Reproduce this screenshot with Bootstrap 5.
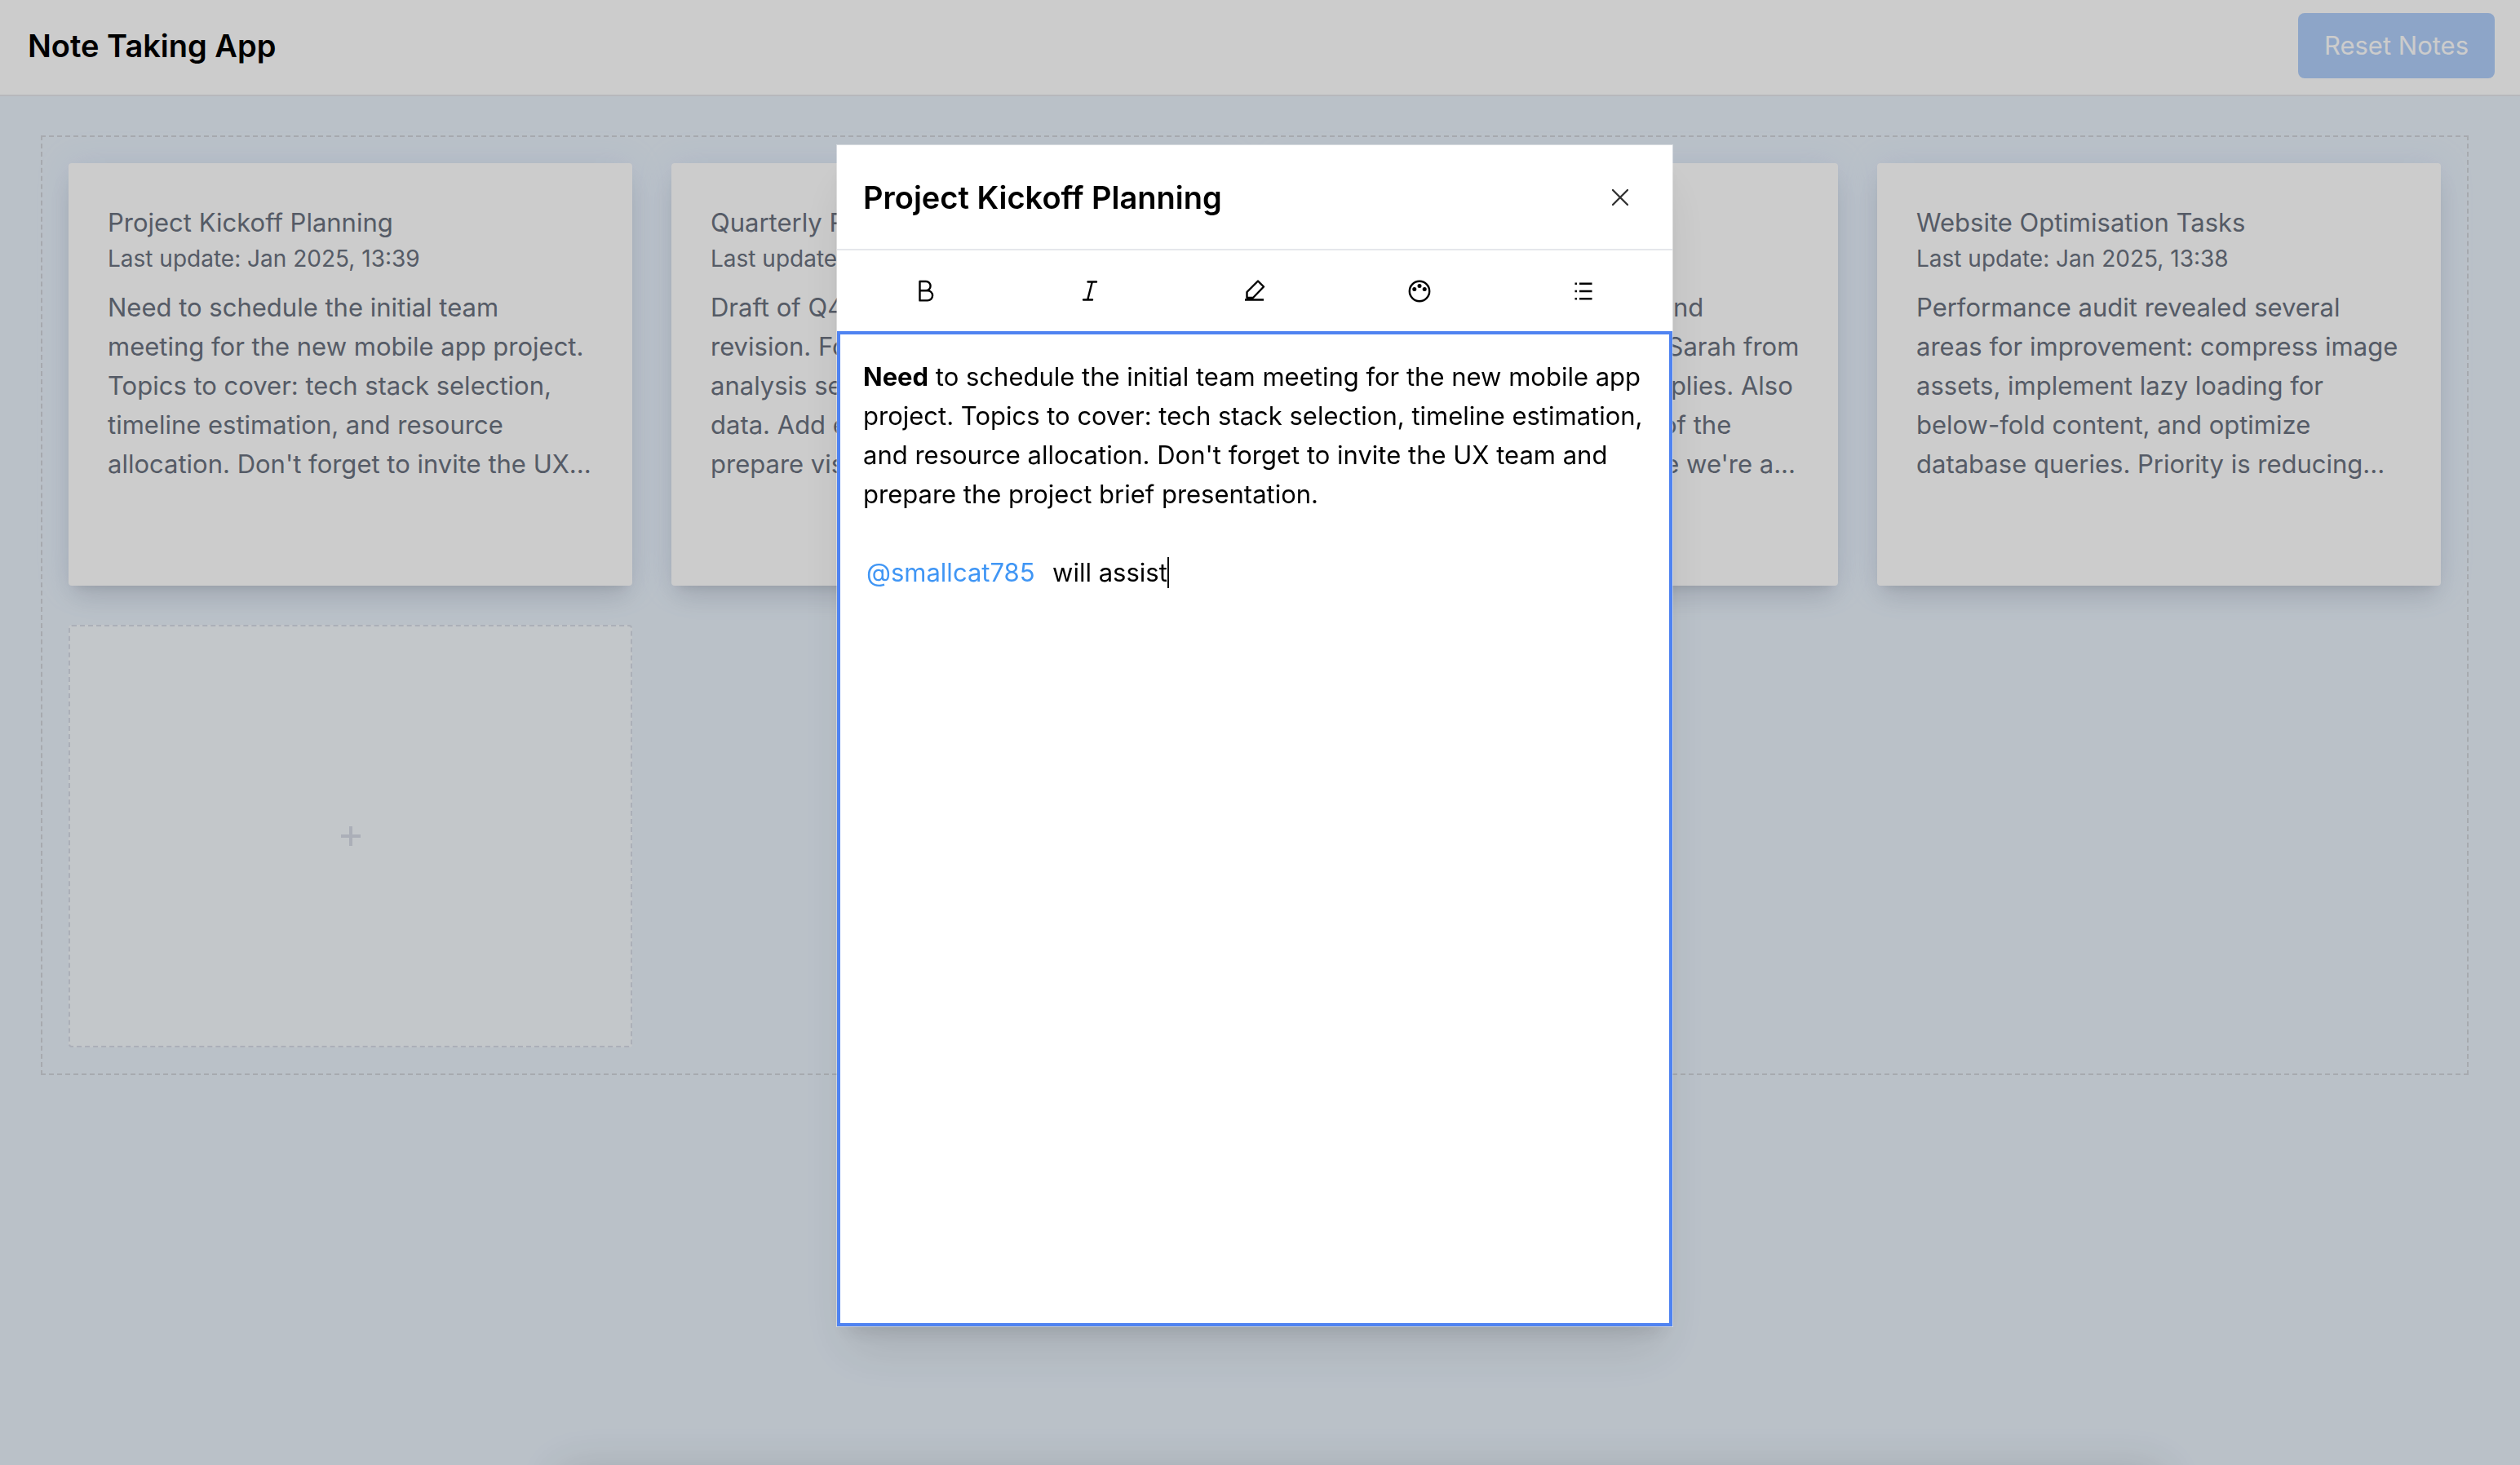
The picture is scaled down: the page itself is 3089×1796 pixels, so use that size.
<!DOCTYPE html>
<html lang="en">
<head>
<meta charset="utf-8">
<meta name="viewport" content="width=device-width, initial-scale=1">
<title>Note Taking App</title>
<link href="https://cdn.jsdelivr.net/npm/bootstrap@5.3.0/dist/css/bootstrap.min.css" rel="stylesheet">
<style>
  body { font-family: Inter, "Liberation Sans", sans-serif; font-size: 31px; line-height: 48px; color: #000; background: #e9f2fb; min-height: 100vh; }
  .app-bar { padding: 16px 31px 20px 34px; border-bottom: 2px solid #e5e7eb; }
  .app-title { font-size: 38px; line-height: 48px; font-weight: 600; }
  .btn-reset { --bs-btn-font-size: 31px; --bs-btn-line-height: 48px; --bs-btn-padding-x: 32px; --bs-btn-padding-y: 16px; --bs-btn-border-width: 0; --bs-btn-border-radius: 8px;
    --bs-btn-color: #fff; --bs-btn-bg: #b1cffb; }
  .board-wrap { padding: 48px 63px 48px 50px; }
  .board { border: 2px dashed #d1d5db; padding: 32px; display: grid; grid-template-columns: repeat(4, minmax(0, 1fr)); gap: 48px; }
  .note { height: 518px; padding: 49px 48px 48px; background: #fff; border-radius: 4px; color: #6b7280; box-shadow: 0 20px 30px -6px rgba(0,0,0,.1), 0 8px 12px -8px rgba(0,0,0,.1), 0 0 40px rgba(160,180,230,.2); white-space: nowrap; }
  .note-title { font-size: 31px; line-height: 48px; font-weight: 400; margin: 0; }
  .note-date { font-size: 28px; line-height: 40px; margin: 0 0 16px; }
  .icon-btn { background: none; border: 0; padding: 0; color: #000; display: flex; align-items: center; justify-content: center; }
  .note-add { height: 518px; background: rgba(255,255,255,.5); border: 2px dashed #d6dbe6; color: #d6dbe6; border-radius: 4px; }
  .scrim { position: fixed; inset: 0; background: rgba(0,0,0,.2); }
  .tray-shadow { position: fixed; top: 100%; left: 22%; right: 14%; height: 100px; box-shadow: 0 0 60px rgba(0,0,0,.12); }
  .dialog-layer { position: fixed; inset: 0 13px 0 0; padding-top: 178px; }
  .note-dialog { width: 1024px; background: #fff; box-shadow: 0 0 0 1px rgba(255,255,255,.4), 0 40px 60px -10px rgba(0,0,0,.1), 0 16px 24px -12px rgba(0,0,0,.12); }
  .dialog-head { height: 129px; padding: 0 32px; border-bottom: 2px solid #e5e7eb; }
  .dialog-title { font-size: 38px; line-height: 48px; font-weight: 600; }
  .close-btn { width: 64px; height: 64px; color: #333; }
  .tool-row { height: 99px; padding: 0 8px; }
  .editor { min-height: 1220px; border: 4px solid #4f83f1; padding: 28px; outline: 0; white-space: nowrap; }
  .mention { color: #4096f5; padding: 0 4px; }
  .caret { display: inline-block; width: 2px; height: 38px; background: #000; vertical-align: -8px; }
  svg { fill: none; stroke: currentColor; stroke-width: 2.4; }
  .plus-icon { stroke-width: 4; }
</style>
<script src="https://cdn.jsdelivr.net/npm/bootstrap@5.3.0/dist/js/bootstrap.bundle.min.js"></script>
</head>
<body>
<header class="app-bar bg-white d-flex justify-content-between align-items-center">
  <h1 class="app-title mb-0">Note Taking App</h1>
  <button type="button" class="btn btn-reset">Reset Notes</button>
</header>
<main class="board-wrap">
  <section class="board" aria-label="Notes">
    <article class="note">
      <h2 class="note-title">Project Kickoff Planning</h2>
      <p class="note-date">Last update: Jan 2025, 13:39</p>
      <p class="mb-0">Need to schedule the initial team<br>meeting for the new mobile app project.<br>Topics to cover: tech stack selection,<br>timeline estimation, and resource<br>allocation. Don't forget to invite the UX...</p>
    </article>
    <article class="note">
      <h2 class="note-title">Quarterly Report</h2>
      <p class="note-date">Last update: Jan 2025, 13:38</p>
      <p class="mb-0">Draft of Q4 report needs<br>revision. Focus on the market<br>analysis section and revenue<br>data. Add extra charts and<br>prepare visuals for the...</p>
    </article>
    <article class="note">
      <h2 class="note-title">Team Event</h2>
      <p class="note-date">Last update: Jan 2025, 13:38</p>
      <p class="mb-0">Planning notes for team visit and<br>catering choices. Check with Sarah from<br>the office on decorations, supplies. Also<br>I need to approve availability of the<br>bigger meeting room, because we're a...</p>
    </article>
    <article class="note">
      <h2 class="note-title">Website Optimisation Tasks</h2>
      <p class="note-date">Last update: Jan 2025, 13:38</p>
      <p class="mb-0">Performance audit revealed several<br>areas for improvement: compress image<br>assets, implement lazy loading for<br>below-fold content, and optimize<br>database queries. Priority is reducing...</p>
    </article>
    <button type="button" class="icon-btn note-add" aria-label="Add note">
      <svg class="plus-icon" width="24" height="24" viewBox="0 0 24 24"><path d="M12 0v24M0 12h24"/></svg>
    </button>
  </section>
</main>
<div class="scrim"></div>
<div class="tray-shadow"></div>
<div class="dialog-layer d-flex justify-content-center align-items-start">
  <section class="note-dialog" role="dialog" aria-labelledby="dialogTitle">
    <div class="dialog-head d-flex justify-content-between align-items-center">
      <h2 class="dialog-title mb-0" id="dialogTitle">Project Kickoff Planning</h2>
      <button type="button" class="icon-btn close-btn" aria-label="Close">
        <svg width="20" height="20" viewBox="0 0 20 20" stroke-linecap="round"><path d="M1 1l18 18M19 1L1 19"/></svg>
      </button>
    </div>
    <div class="tool-row d-flex" role="toolbar" aria-label="Formatting">
      <button type="button" class="icon-btn flex-fill w-100" aria-label="Bold">
        <svg width="28" height="28" viewBox="0 0 28 28" stroke-linejoin="round"><path d="M6.500 2H14a5.600 5.600 0 0 1 0 11.200H6.500zM6.500 13.200H16a6.100 6.100 0 0 1 0 12.200H6.500z"/></svg>
      </button>
      <button type="button" class="icon-btn flex-fill w-100" aria-label="Italic">
        <svg width="28" height="28" viewBox="0 0 28 28" stroke-linecap="round"><path d="M11.500 2.500h10.500M6 24.500h11M16.800 2.500l-5.600 22"/></svg>
      </button>
      <button type="button" class="icon-btn flex-fill w-100" aria-label="Highlight">
        <svg width="28" height="28" viewBox="0 0 28 28" stroke-linejoin="round"><path d="M2 24.500h23M4.500 22v-7L18 1.500l7 7L12 22z"/></svg>
      </button>
      <button type="button" class="icon-btn flex-fill w-100" aria-label="Colour">
        <svg width="28" height="28" viewBox="0 0 28 28"><circle cx="14" cy="14" r="12.200"/><g fill="currentColor" stroke="none"><circle cx="14" cy="7.500" r="2.500"/><circle cx="7.800" cy="11.500" r="2.500"/><circle cx="20.200" cy="11.500" r="2.500"/></g></svg>
      </button>
      <button type="button" class="icon-btn flex-fill w-100" aria-label="List">
        <svg width="28" height="28" viewBox="0 0 28 28"><path d="M9 4.700h15.500M9 14h15.500M9 23.300h15.500M3.500 4.700H6M3.500 14H6M3.500 23.300H6"/></svg>
      </button>
    </div>
    <div class="editor" contenteditable="true" role="textbox" aria-multiline="true" aria-label="Note text"><strong class="fw-bold">Need</strong> to schedule the initial team meeting for the new mobile app<br>project. Topics to cover: tech stack selection, timeline estimation,<br>and resource allocation. Don't forget to invite the UX team and<br>prepare the project brief presentation.<br><br><a href="#" class="mention text-decoration-none">@smallcat785</a>&nbsp; will assist<span class="caret"></span></div>
  </section>
</div>
</body>
</html>
